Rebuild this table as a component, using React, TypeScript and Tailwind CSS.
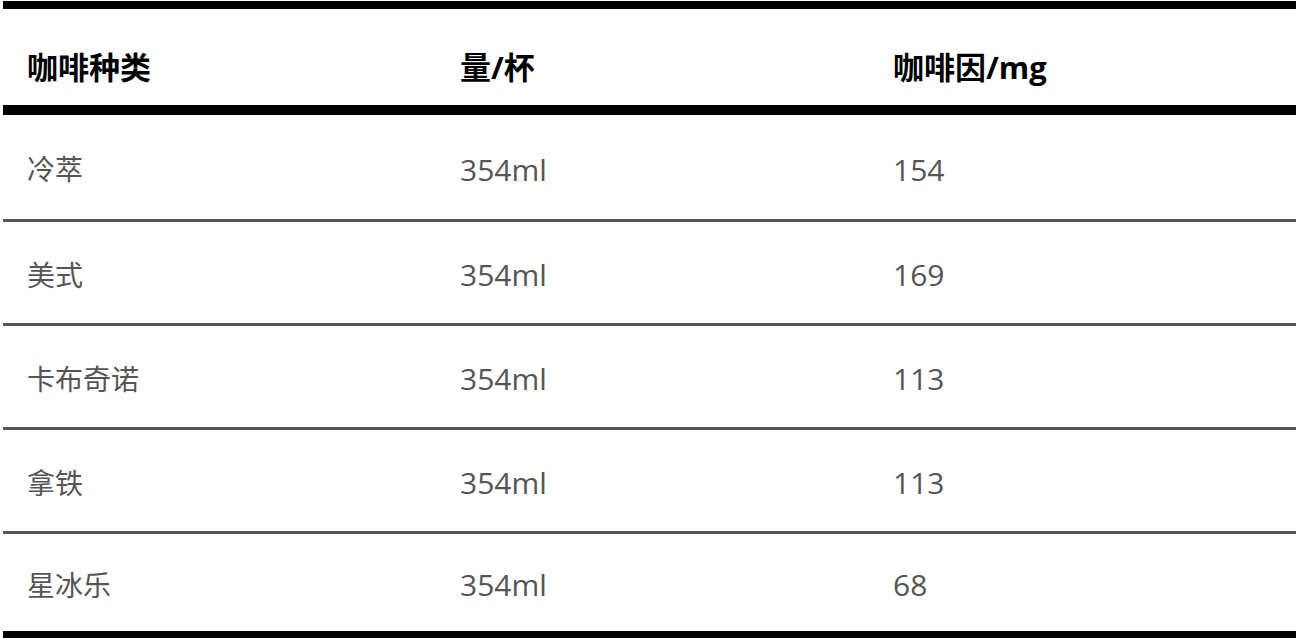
import React from 'react';

const rows = [
    { name: '冷萃', size: '354ml', caffeine: '154' },
    { name: '美式', size: '354ml', caffeine: '169' },
    { name: '卡布奇诺', size: '354ml', caffeine: '113' },
    { name: '拿铁', size: '354ml', caffeine: '113' },
    { name: '星冰乐', size: '354ml', caffeine: '68' },
];

export default function App() {
    return (
        <div
            className="w-[1296px] h-[638px] overflow-hidden bg-white pt-px pl-[3px]"
            style={{ fontFamily: '"Open Sans", "Noto Sans CJK SC", sans-serif' }}
        >
            <div className="w-[1299px] border-t-8 border-black">
                {/* Header */}
                <div className="grid grid-cols-3 h-[106px] border-b-[10px] border-black items-center text-[31px] font-bold text-black">
                    <div className="pl-6 pt-5">咖啡种类</div>
                    <div className="pl-6 pt-5">量/杯</div>
                    <div className="pl-6 pt-5">咖啡因/mg</div>
                </div>

                {/* Body */}
                {rows.map((row, i) => (
                    <div
                        key={row.name}
                        className={
                            i === rows.length - 1
                                ? 'grid grid-cols-3 h-[106px] border-b-[9px] border-black items-center text-[#555]'
                                : i === 0
                                  ? 'grid grid-cols-3 h-[107px] border-b-[3px] border-[#555] items-center text-[#555]'
                                  : 'grid grid-cols-3 h-[104px] border-b-[3px] border-[#555] items-center text-[#555]'
                        }
                    >
                        <div className="pl-6 pt-1 text-[28px]">{row.name}</div>
                        <div className="pl-6 pt-1 text-[30px]">{row.size}</div>
                        <div className="pl-6 pt-1 text-[30px]">{row.caffeine}</div>
                    </div>
                ))}
            </div>
        </div>
    );
}
